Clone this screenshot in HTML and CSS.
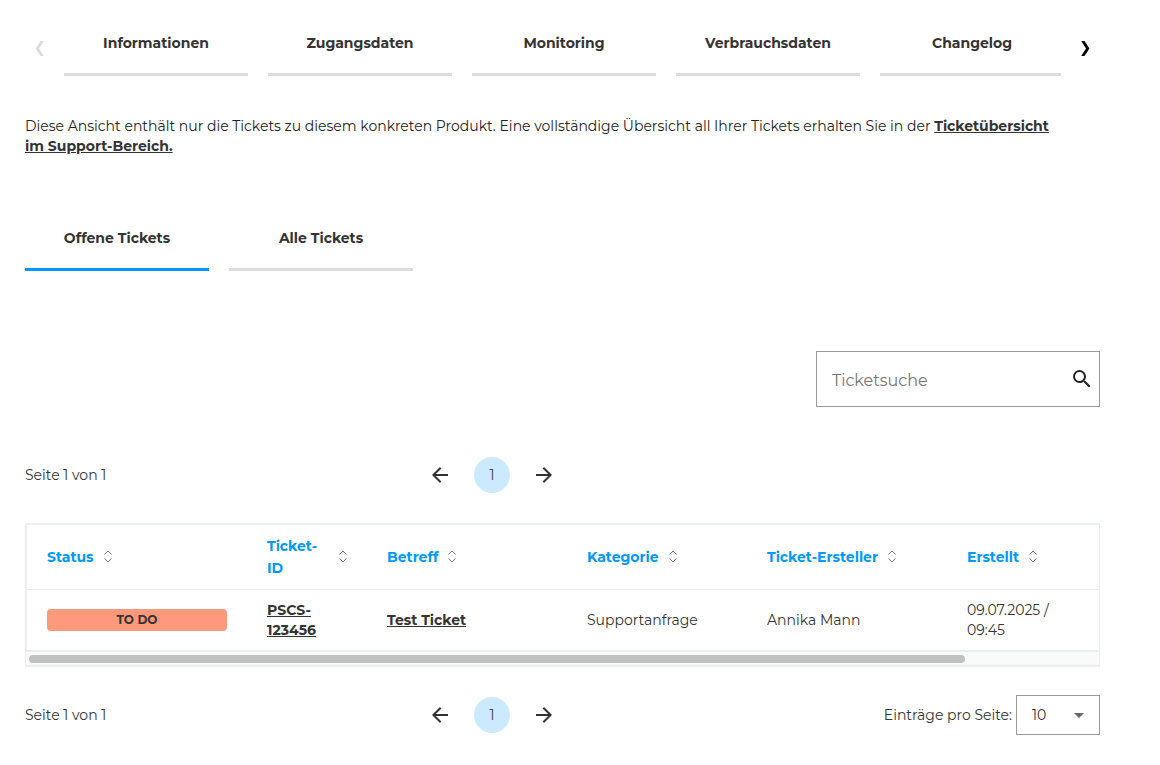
FILE: index.html
```html
<!DOCTYPE html>
<html lang="de">
<head>
<meta charset="utf-8">
<meta name="viewport" content="width=device-width, initial-scale=1">
<title>Tickets</title>
<link rel="stylesheet" href="styles.css">
</head>
<body>
<svg class="sprite" aria-hidden="true">
  <symbol id="sort" viewBox="0 0 8 14"><path d="M.5 4.500 4 1l3.500 3.500M.5 8.500 4 12l3.500-3.500"/></symbol>
  <symbol id="arrow-left" viewBox="0 0 24 24"><path d="M20 11H7.830l5.590-5.590L12 4l-8 8 8 8 1.410-1.410L7.830 13H20v-2z"/></symbol>
  <symbol id="arrow-right" viewBox="0 0 24 24"><path d="m12 4-1.410 1.410L16.170 11H4v2h12.170l-5.580 5.590L12 20l8-8z"/></symbol>
</svg>
<main class="page">
  <nav class="carousel">
    <button class="carousel-arrow" type="button" disabled><svg width="9" height="15" viewBox="0 0 9 15"><path d="M5.500 0H8.800L4 7.500l4.800 7.500H5.500L.6 7.500z"/></svg></button>
    <div class="tabs carousel-track">
      <a class="tab" href="#">Informationen</a>
      <a class="tab" href="#">Zugangsdaten</a>
      <a class="tab" href="#">Monitoring</a>
      <a class="tab" href="#">Verbrauchsdaten</a>
      <a class="tab" href="#">Changelog</a>
    </div>
    <button class="carousel-arrow next" type="button"><svg width="9" height="15" viewBox="0 0 9 15"><path d="M.2 0h3.300L8.400 7.500 3.500 15H.2L5 7.500z"/></svg></button>
  </nav>

  <p class="intro">Diese Ansicht enthält nur die Tickets zu diesem konkreten Produkt. Eine vollständige Übersicht all Ihrer Tickets erhalten Sie in der <a class="link" href="#">Ticketübersicht im&nbsp;Support-Bereich.</a></p>

  <div class="tabs ticket-tabs">
    <button class="tab active" type="button">Offene Tickets</button>
    <button class="tab" type="button">Alle Tickets</button>
  </div>

  <form class="search">
    <input class="search-input" type="search" placeholder="Ticketsuche" aria-label="Ticketsuche">
    <button class="search-button" type="submit"><svg width="24" height="24" viewBox="0 0 24 24"><path d="M15.500 14h-.790l-.280-.270A6.471 6.471 0 0 0 16 9.500 6.500 6.500 0 1 0 9.500 16c1.610 0 3.090-.590 4.230-1.570l.270.280v.790l5 4.990L20.490 19l-4.990-5zm-6 0C7.010 14 5 11.990 5 9.500S7.010 5 9.500 5 14 7.010 14 9.500 11.990 14 9.500 14z"/></svg></button>
  </form>

  <div class="pager pager-top">
    <span class="pager-info">Seite 1 von 1</span>
    <div class="pager-nav">
      <button class="icon-button" type="button"><svg class="arrow"><use href="#arrow-left"/></svg></button>
      <button class="page-number" type="button">1</button>
      <button class="icon-button" type="button"><svg class="arrow"><use href="#arrow-right"/></svg></button>
    </div>
  </div>

  <div class="table-box">
    <div class="table-scroll">
      <table class="tickets">
        <colgroup><col class="w220"><col class="w120"><col class="w200"><col class="w180"><col class="w200"><col class="w140"><col class="w160"></colgroup>
        <thead>
          <tr>
            <th><button class="sort" type="button">Status<svg class="sort-icon"><use href="#sort"/></svg></button></th>
            <th><button class="sort spread" type="button"><span>Ticket-<wbr>ID</span><svg class="sort-icon"><use href="#sort"/></svg></button></th>
            <th><button class="sort" type="button">Betreff<svg class="sort-icon"><use href="#sort"/></svg></button></th>
            <th><button class="sort" type="button">Kategorie<svg class="sort-icon"><use href="#sort"/></svg></button></th>
            <th><button class="sort" type="button">Ticket-Ersteller<svg class="sort-icon"><use href="#sort"/></svg></button></th>
            <th><button class="sort" type="button">Erstellt<svg class="sort-icon"><use href="#sort"/></svg></button></th>
            <td></td>
          </tr>
        </thead>
        <tbody>
          <tr>
            <td><span class="status">TO DO</span></td>
            <td><a class="link" href="#">PSCS-<wbr>123456</a></td>
            <td><a class="link" href="#">Test Ticket</a></td>
            <td>Supportanfrage</td>
            <td>Annika Mann</td>
            <td>09.07.2025 / 09:45</td>
            <td></td>
          </tr>
        </tbody>
      </table>
    </div>
    <div class="scrollbar"><div class="scrollbar-thumb"></div></div>
  </div>

  <div class="pager pager-bottom">
    <span class="pager-info">Seite 1 von 1</span>
    <div class="pager-nav">
      <button class="icon-button" type="button"><svg class="arrow"><use href="#arrow-left"/></svg></button>
      <button class="page-number" type="button">1</button>
      <button class="icon-button" type="button"><svg class="arrow"><use href="#arrow-right"/></svg></button>
    </div>
    <div class="page-size">
      <label for="page-size">Einträge pro Seite:</label>
      <div class="select-wrap">
        <select id="page-size" class="select"><option>10</option><option>25</option><option>50</option></select>
        <svg class="caret" width="10" height="5" viewBox="0 0 10 5"><path d="M0 0h10L5 5z"/></svg>
      </div>
    </div>
  </div>
</main>
</body>
</html>
```
FILE: styles.css
```css
* { box-sizing: border-box; }

body {
  margin: 0;
  background: #fff;
  color: #333;
  font: 14px/20px Montserrat, Inter, sans-serif;
}

button, input, select {
  margin: 0;
  padding: 0;
  border: 0;
  background: none;
  color: inherit;
  font: inherit;
}

button { cursor: pointer; }

svg { display: block; flex: none; }

.sprite { position: absolute; width: 0; height: 0; }

.page { padding: 20px 60px 30px 25px; }

.carousel {
  display: grid;
  grid-template-columns: 39px minmax(0, 1fr) 39px;
}

.carousel-arrow {
  display: flex;
  align-items: center;
  padding-left: 10px;
  fill: #000;
}

.carousel-arrow.next { padding-left: 20px; }
.carousel-arrow:disabled { fill: #dcdcdc; }

.tabs { display: flex; gap: 20px; }

.carousel-track { overflow: hidden; }

.tab {
  flex: 0 0 184px;
  height: 56px;
  padding-top: 13px;
  border-bottom: 3px solid #dcdcdc;
  color: #333;
  font-weight: 700;
  text-align: center;
  text-decoration: none;
}

.ticket-tabs { margin-top: 59px; }
.ticket-tabs .tab { display: flex; justify-content: center; }
.tab.active { border-color: #0099f8; }

.intro { margin: 40px 0 0; color: #222; }

.link { color: #333; font-weight: 700; text-underline-offset: 1px; }

.search {
  display: flex;
  align-items: center;
  width: 284px;
  height: 56px;
  margin: 80px 0 0 auto;
  padding: 0 5px 0 15px;
  border: 1px solid #999;
}

.search-input {
  flex: 1;
  min-width: 0;
  padding-top: 3px;
  outline: 0;
  font-size: 16px;
  line-height: 24px;
  appearance: none;
}

.search-input::placeholder { color: #757575; opacity: 1; }

.search-button { fill: #222; }

.pager {
  display: grid;
  grid-template-columns: 37.5% auto 1fr;
  align-items: center;
  min-height: 40px;
}

.pager-top { margin-top: 48px; }
.pager-bottom { margin-top: 28px; }

.pager-nav { display: flex; align-items: center; gap: 22px; }

.icon-button { width: 24px; height: 24px; }

.arrow { width: 24px; height: 24px; fill: #333; }

.page-number {
  width: 36px;
  height: 36px;
  border-radius: 50%;
  background: #cceafe;
  color: #444;
}

.table-box {
  margin-top: 28px;
  border: solid #ebeeee;
  border-width: 2px 1px;
}

.table-scroll {
  overflow-x: auto;
  border-left: 1px solid #ebeeee;
  border-bottom: 2px solid #ebeeee;
  scrollbar-width: none;
}

.tickets { width: 1220px; table-layout: fixed; border-collapse: collapse; }

.w120 { width: 120px; }
.w140 { width: 140px; }
.w160 { width: 160px; }
.w180 { width: 180px; }
.w200 { width: 200px; }
.w220 { width: 220px; }

.tickets th, .tickets td { padding: 10px 20px; text-align: left; }
.tickets thead tr { border-bottom: 1px solid #ebeeee; }

.sort {
  display: flex;
  align-items: center;
  gap: 10px;
  color: #0099f8;
  font-weight: 700;
  line-height: 22px;
  text-align: left;
}

.sort.spread { width: 100%; justify-content: space-between; }

.sort-icon {
  width: 8px;
  height: 14px;
  fill: none;
  stroke: #777;
  stroke-width: 1;
}

.status {
  display: block;
  border-radius: 4px;
  background: #ff997c;
  font-size: 12px;
  font-weight: 700;
  line-height: 22px;
  text-align: center;
}

.scrollbar { padding: 3px 3px 2px; background: #fafafa; }

.scrollbar-thumb { width: 87.7%; height: 8px; border-radius: 4px; background: #c1c1c1; }

.page-size {
  display: flex;
  align-items: center;
  justify-content: flex-end;
  gap: 4px;
}

.select-wrap { position: relative; }

.select {
  width: 84px;
  height: 40px;
  padding-left: 15px;
  border: 1px solid #999;
  border-radius: 0;
  background: #fff;
  appearance: none;
}

.caret {
  position: absolute;
  top: 18px;
  right: 16px;
  fill: #666;
  pointer-events: none;
}
```
